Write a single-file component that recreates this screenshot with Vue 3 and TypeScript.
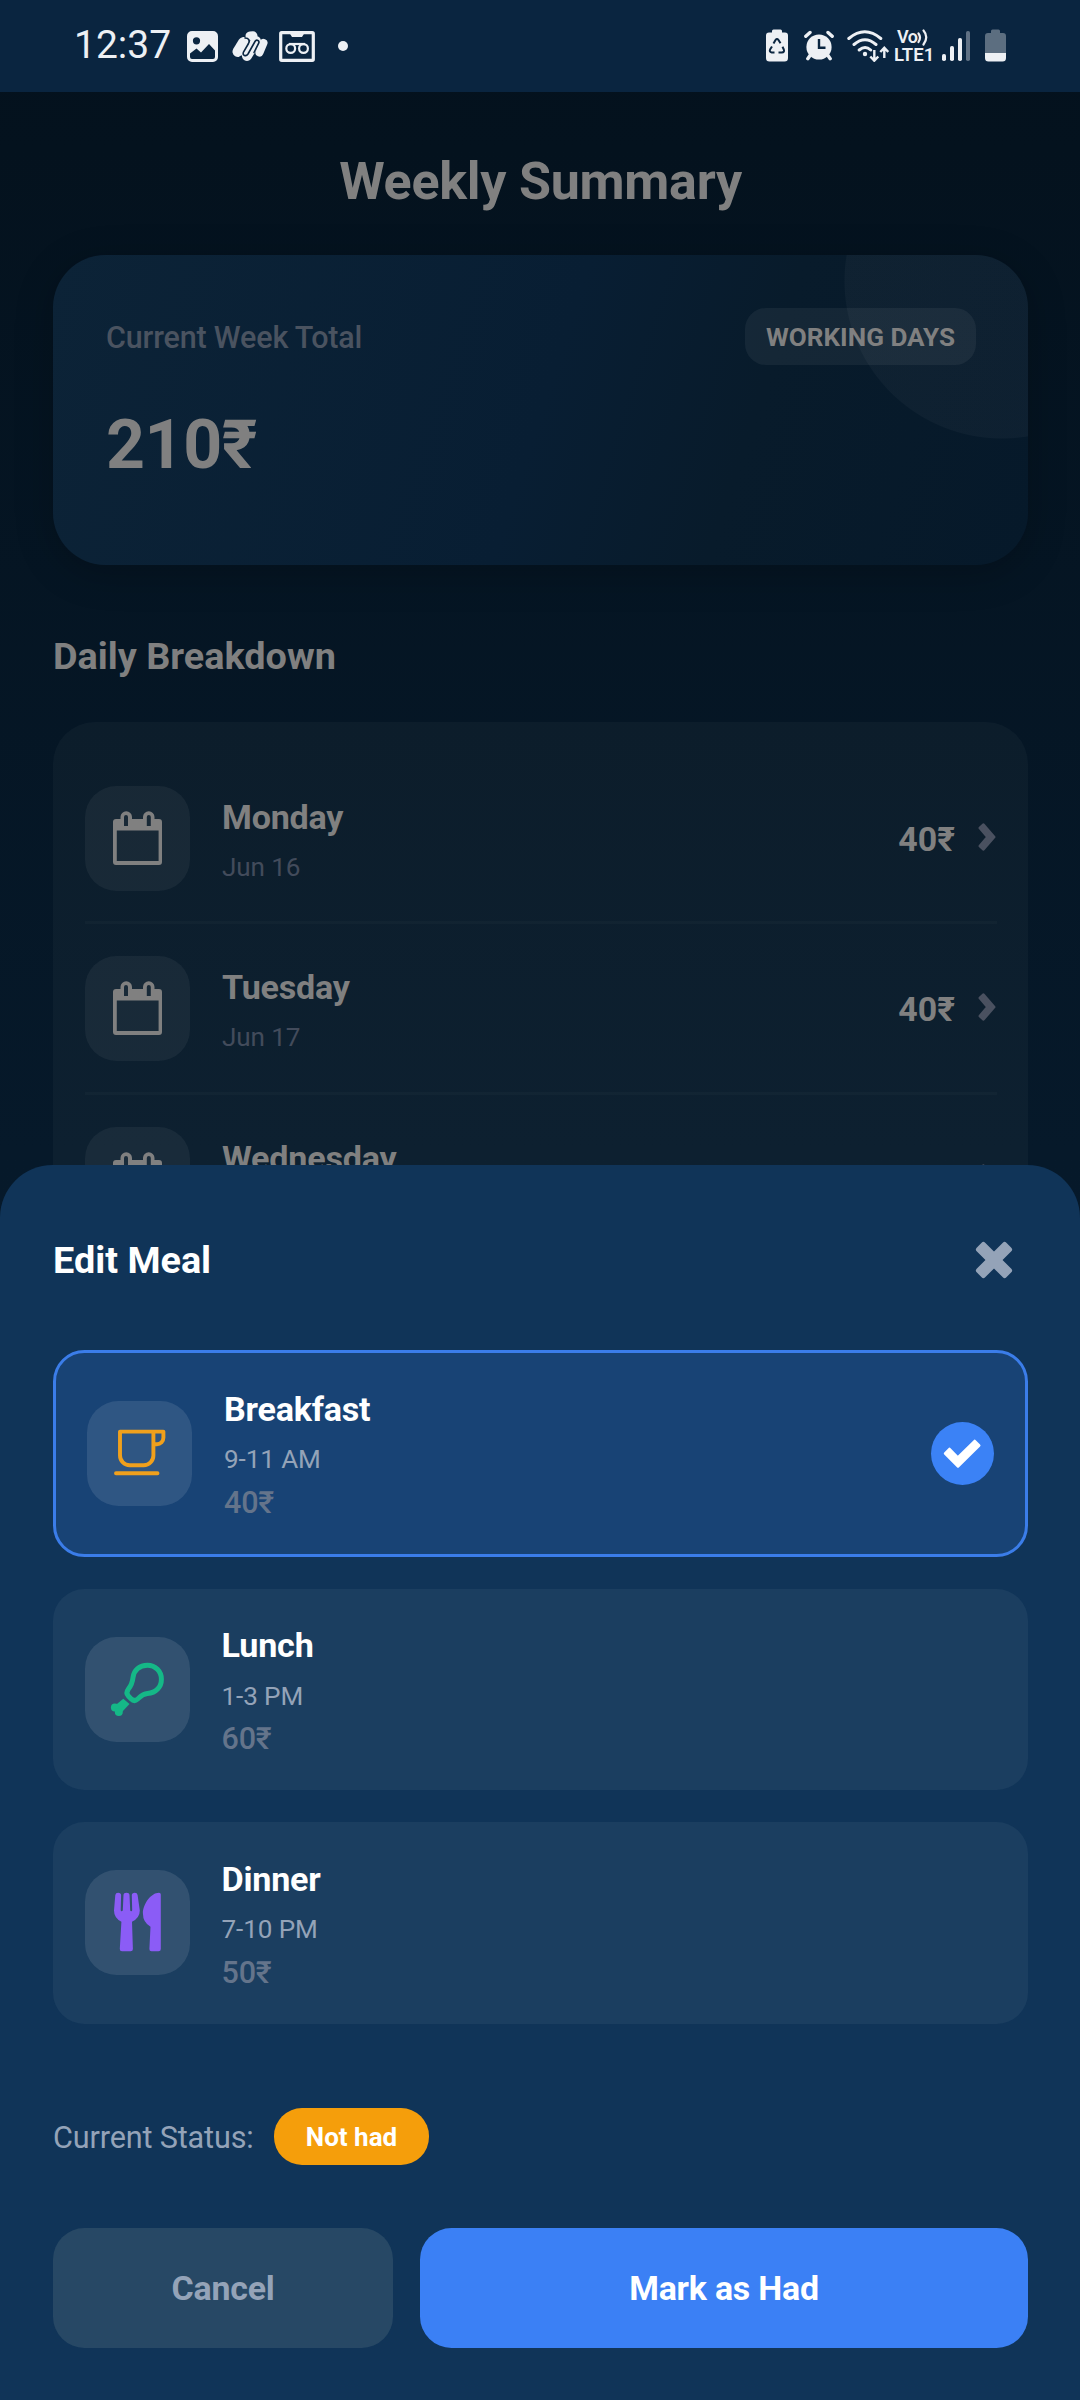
<script setup lang="ts">
import { ref } from 'vue'

interface Day {
  name: string
  date: string
  amount: string
}

interface Meal {
  id: string
  name: string
  time: string
  price: string
}

const days: Day[] = [
  { name: 'Monday', date: 'Jun 16', amount: '40₹' },
  { name: 'Tuesday', date: 'Jun 17', amount: '40₹' },
  { name: 'Wednesday', date: 'Jun 18', amount: '40₹' },
]

const meals: Meal[] = [
  { id: 'breakfast', name: 'Breakfast', time: '9-11 AM', price: '40₹' },
  { id: 'lunch', name: 'Lunch', time: '1-3 PM', price: '60₹' },
  { id: 'dinner', name: 'Dinner', time: '7-10 PM', price: '50₹' },
]

const selected = ref('breakfast')
</script>

<template>
  <div class="screen">
    <header class="statusbar">
      <div class="sb-left">
        <span class="clock">12:37</span>
        <svg class="i-photo" width="31" height="31" viewBox="0 0 31 31">
          <path fill="currentColor" fill-rule="evenodd" d="M5 0h21a5 5 0 0 1 5 5v21a5 5 0 0 1-5 5H5a5 5 0 0 1-5-5V5a5 5 0 0 1 5-5zM9.500 6.200a3.600 3.600 0 1 0 0 7.200a3.600 3.600 0 0 0 0-7.200zM3 22.500v3.500a2 2 0 0 0 2 2h21a2 2 0 0 0 2-2v-6.500l-6-6.500-8 8.500-4.500-4z" />
        </svg>
        <svg class="i-swirl" width="36" height="31" viewBox="0 0 36 31">
          <g fill="none" stroke="currentColor" stroke-linecap="round">
            <path stroke-width="11" d="M6 20.500 11.500 11.500" />
            <path stroke-width="9" d="M18 5 21 4.800" />
            <path stroke-width="10" d="M15 25 24 10" />
            <path stroke-width="8" d="M27.500 21.500 31.500 12" />
          </g>
          <path fill="none" stroke="#0a2540" stroke-width="1.600" stroke-linecap="round" d="M13 7c4 0 5 2.500 3.500 5.500l-5 8.500c-1.500 3.500 2.500 5 4.500 2l7-12.500c1.500-2.500 5-1 3.700 1.700L22 21.500M8.500 25.500v5" />
        </svg>
        <svg class="i-tape" width="36" height="31" viewBox="0 0 36 31">
          <rect x="1.700" y="1.700" width="32.600" height="27.600" rx="1" fill="none" stroke="currentColor" stroke-width="3.200" />
          <path fill="currentColor" d="M10.500 2h15l-2.500 4h-10z" />
          <g fill="none" stroke="currentColor" stroke-width="2.200">
            <circle cx="11.700" cy="17.500" r="4.400" />
            <circle cx="24.500" cy="17.500" r="4.400" />
            <path d="M10 13h16" />
          </g>
        </svg>
        <span class="dot"></span>
      </div>
      <div class="sb-right">
        <svg class="i-recycle" width="22" height="33" viewBox="0 0 22 33">
          <path fill="currentColor" d="M6 3.500V2a1.500 1.500 0 0 1 1.500-1.500h7A1.500 1.500 0 0 1 16 2v1.500h3a3 3 0 0 1 3 3V29a3.500 3.500 0 0 1-3.500 3.500h-15A3.500 3.500 0 0 1 0 29V6.500a3 3 0 0 1 3-3z" />
          <g fill="none" stroke="#0a2540" stroke-width="2" stroke-linejoin="round">
            <path d="M7.500 14.500 9.500 11q1.500-2 3 0l2 3.300M16.500 17.800l1.300 2.700q1 2.700-2 3h-3.300M8.500 23.500H5.700q-2.800-.500-1.500-3.200L6 17.500" />
          </g>
        </svg>
        <svg class="i-alarm" width="30" height="31" viewBox="0 0 30 31">
          <circle cx="15" cy="17" r="12.600" fill="currentColor" />
          <path fill="none" stroke="currentColor" stroke-width="3.400" stroke-linecap="round" d="M1.800 6.300 6 2.500M28.200 6.300 24 2.500M6 25.500 3.800 28.700M24 25.500l2.200 3.200" />
          <path fill="none" stroke="#0a2540" stroke-width="2.400" d="M15 9v8.800h6.500" />
        </svg>
        <svg class="i-wifi" width="42" height="32" viewBox="0 0 42 32">
          <g fill="none" stroke="currentColor" stroke-width="3" stroke-linecap="round">
            <path d="M1.800 8.500q16-13.500 32 0M7 14.500q11-9.500 22 0M12.200 20q6-5 11.500 0" />
          </g>
          <circle cx="18" cy="24" r="2.200" fill="currentColor" />
          <path fill="none" stroke="currentColor" stroke-width="2.400" d="M27.300 20v10.500M23.300 26.500l4 4.200 4-4.200M37.300 28V18M33.300 22l4-4.200 4 4.200" />
        </svg>
        <div class="volte">
          <span class="vo">Vo<svg width="12" height="17" viewBox="0 0 12 17"><path fill="none" stroke="currentColor" stroke-width="2.200" stroke-linecap="round" d="M1.500 4.500q3 4 0 8.500M6.500 1.500q5.500 6.500 0 14" /></svg></span>
          <span class="lte">LTE1</span>
        </div>
        <svg class="i-signal" width="28" height="30" viewBox="0 0 28 30">
          <g fill="currentColor">
            <rect x="0" y="23" width="4" height="7" rx="1.800" />
            <rect x="8" y="15" width="4" height="15" rx="1.800" />
            <rect x="16" y="7" width="4" height="23" rx="1.800" />
            <rect x="24" y="0" width="4" height="30" rx="1.800" opacity=".38" />
          </g>
        </svg>
        <svg class="i-batt" width="21" height="33" viewBox="0 0 21 33">
          <path fill="#5c6e80" d="M6 4V2a1.500 1.500 0 0 1 1.500-1.500h6A1.500 1.500 0 0 1 15 2v2h3a3 3 0 0 1 3 3v17H0V7a3 3 0 0 1 3-3z" />
          <path fill="currentColor" d="M0 24h21v5a3.500 3.500 0 0 1-3.500 3.500h-14A3.500 3.500 0 0 1 0 29z" />
        </svg>
      </div>
    </header>

    <main class="page">
      <h1 class="title">Weekly Summary</h1>

      <section class="summary">
        <div class="orb"></div>
        <div class="summary-top">
          <span class="summary-label">Current Week Total</span>
          <span class="badge">WORKING DAYS</span>
        </div>
        <div class="total">210₹</div>
      </section>

      <h2 class="section-title">Daily Breakdown</h2>

      <section class="days">
        <div v-for="day in days" :key="day.name" class="day">
          <div class="tile dim">
            <svg viewBox="0 0 105 105">
              <path fill="currentColor" fill-rule="evenodd" d="M28 36q0-3 3-3h4.500v-2a5.750 5.750 0 0 1 11.500 0v2H58v-2a5.750 5.750 0 0 1 11.500 0v2H74q3 0 3 3v40q0 3-3 3H31q-3 0-3-3zM31.800 44.500V75h41.800V44.500zM39 31v9h4v-9a2 2 0 0 0-4 0zM61.800 31v9h4v-9a2 2 0 0 0-4 0z" />
            </svg>
          </div>
          <div class="day-text">
            <span class="name">{{ day.name }}</span>
            <span class="sub">{{ day.date }}</span>
          </div>
          <span class="amount">{{ day.amount }}</span>
          <svg class="chev" width="18" height="28" viewBox="0 0 18 28">
            <path fill="currentColor" stroke="currentColor" stroke-width="2.400" stroke-linejoin="round" d="M1.700 5 5.500 1.500 16.300 14 5.500 26.500 1.700 23 9.300 14z" />
          </svg>
        </div>
      </section>
    </main>

    <section class="sheet">
      <div class="sheet-head">
        <h2 class="sheet-title">Edit Meal</h2>
        <svg class="close" width="36" height="36" viewBox="0 0 36 36">
          <g fill="currentColor">
            <rect x="-3" y="12" width="42" height="12" rx="2.500" transform="rotate(45 18 18)" />
            <rect x="-3" y="12" width="42" height="12" rx="2.500" transform="rotate(-45 18 18)" />
          </g>
        </svg>
      </div>

      <div class="meals">
        <div
          v-for="meal in meals"
          :key="meal.id"
          class="meal"
          :class="{ active: selected === meal.id }"
          @click="selected = meal.id"
        >
          <div class="tile">
            <svg v-if="meal.id === 'breakfast'" class="amber" viewBox="0 0 105 105">
              <g fill="none" stroke="currentColor" stroke-width="3.900" stroke-linecap="round" stroke-linejoin="round">
                <path d="M33 30.600v24a9.700 9.700 0 0 0 9.700 9.700h14a9.700 9.700 0 0 0 9.700-9.700v-24zM66.400 30.600h10v6.200a6.500 6.500 0 0 1-6.500 6.500h-3.500M29 72.200h41.500" />
              </g>
            </svg>
            <svg v-else-if="meal.id === 'lunch'" class="green" viewBox="0 0 105 105">
              <path fill="none" stroke="currentColor" stroke-width="5" stroke-linejoin="round" d="M62.400 28.200C70.500 28.200 76.400 34.500 76.400 42.200C76.400 50 71 55.800 62.500 56.500C57 57 55.500 59.500 52.700 62C50.500 64 48 63.800 46 61.800L43.300 59C41 56.300 41.500 54.500 43.300 52.200C46.800 48 47.500 45 48 40.500C48.800 33 54.500 28.200 62.400 28.200z" />
              <g fill="currentColor">
                <path d="M38.300 61.700 44.500 67 36.500 75.500 29.500 69z" />
                <circle cx="29.900" cy="70.600" r="4" />
                <circle cx="33.800" cy="75" r="4" />
              </g>
            </svg>
            <svg v-else class="violet" viewBox="0 0 105 105">
              <path fill="currentColor" d="M30.300 25q.400-2.300 2.800-2.300 3 0 3 2.600L35.700 40q0 1.300 1 1.300t1.100-1.300L38.500 25q.200-2.300 3-2.300t3 2.300L45.200 40q0 1.300 1 1.300t1-1.300L46.800 25.300q0-2.600 3-2.600 2.400 0 2.800 2.300L54.800 40.500Q54.800 48 47 51.700L47.900 79q0 2.300-2.300 2.300H37q-2.300 0-2.200-2.300L36.400 51.700Q29 48 29 40.500z" />
              <path fill="currentColor" d="M75.800 24.500V79q0 2.300-2.300 2.300H66.500q-2.200 0-2.100-2.300L65.500 56.700Q57.900 52.500 57.900 43.300C58 34 66 22.700 74 22.700q1.800 0 1.800 1.800z" />
            </svg>
          </div>
          <div class="meal-text">
            <span class="name">{{ meal.name }}</span>
            <span class="sub">{{ meal.time }}</span>
            <span class="price">{{ meal.price }}</span>
          </div>
          <div v-if="selected === meal.id" class="tick">
            <svg viewBox="0 0 63 63">
              <path fill="#fff" stroke="#fff" stroke-width="3" stroke-linejoin="round" d="M18.500 27.200 26.800 35.700 43.700 19.200 48 23.500 27 44.200 14.300 31.500z" />
            </svg>
          </div>
        </div>
      </div>

      <div class="status">
        <span class="status-label">Current Status:</span>
        <span class="pill">Not had</span>
      </div>

      <div class="actions">
        <button class="btn cancel">Cancel</button>
        <button class="btn primary">Mark as Had</button>
      </div>
    </section>
  </div>
</template>

<style>
body {
  margin: 0;
  background: #04121f;
}
</style>

<style scoped>
.screen {
  position: relative;
  width: 1080px;
  height: 2400px;
  overflow: hidden;
  font-family: Roboto, 'Noto Sans', sans-serif;
  background: linear-gradient(180deg, #04111d 0, #04121e 150px, #06192a 1150px, #071b2f 2400px);
}
h1,
h2 {
  margin: 0;
}

/* status bar */
.statusbar {
  height: 92px;
  display: flex;
  justify-content: space-between;
  background: #0a2540;
  color: #edf0f4;
}
.sb-left,
.sb-right {
  display: flex;
  align-items: flex-start;
}
.sb-left {
  padding-left: 74px;
}
.clock {
  width: 113px;
  margin-top: 22px;
  font-size: 39px;
  line-height: 46px;
}
.i-photo { margin-top: 31px; }
.i-swirl { margin: 31px 0 0 13.500px; }
.i-tape { margin: 31px 0 0 11.500px; }
.dot {
  width: 10px;
  height: 10px;
  margin: 41px 0 0 23px;
  border-radius: 50%;
  background: currentColor;
}
.sb-right {
  padding-right: 74px;
}
.i-recycle { margin-top: 29px; }
.i-alarm { margin: 30px 0 0 16.500px; }
.i-wifi { margin: 30px 0 0 13px; }
.volte {
  display: flex;
  flex-direction: column;
  width: 40px;
  margin: 29px 0 0 5px;
  font-weight: 600;
}
.vo {
  display: flex;
  height: 17px;
  padding-left: 3px;
  font-size: 18px;
  line-height: 16px;
  letter-spacing: -0.500px;
}
.lte {
  font-size: 18.500px;
  line-height: 18px;
}
.i-signal { margin: 31px 0 0 8px; }
.i-batt { margin: 29px 0 0 15px; }

/* dimmed page */
.page {
  padding: 54px 52px 0 53px;
  color: #808080;
}
.title {
  height: 70px;
  font-size: 52px;
  line-height: 72px;
  letter-spacing: -0.250px;
  font-weight: 700;
  text-align: center;
}
.summary {
  position: relative;
  box-sizing: border-box;
  height: 310px;
  margin-top: 39px;
  padding: 53px 52px 53px 53px;
  border-radius: 52.500px;
  background: linear-gradient(108deg, #0c2337 0%, #081e33 50%, #081b2b 70%, #06192a 100%);
  box-shadow: 0 8px 38px rgba(0, 0, 0, 0.220);
}
.orb {
  position: absolute;
  inset: 0;
  border-radius: 52.500px;
  background: radial-gradient(circle 158px at 949px 26px, rgba(255, 255, 255, 0.030) 157px, transparent 158px);
}
.summary-top {
  position: relative;
  display: flex;
  justify-content: space-between;
  align-items: center;
  height: 57px;
}
.summary-label {
  padding-top: 2px;
  font-size: 30.500px;
  line-height: 38px;
  letter-spacing: -0.170px;
  font-weight: 500;
  color: #4a5360;
}
.badge {
  padding: 14px 21px 12px;
  border-radius: 21px;
  background: rgba(255, 255, 255, 0.055);
  font-size: 26.100px;
  line-height: 31px;
  font-weight: 700;
}
.total {
  position: relative;
  margin-top: 40px;
  font-size: 68px;
  line-height: 80px;
  letter-spacing: -0.400px;
  font-weight: 700;
}
.section-title {
  margin-top: 68px;
  font-size: 37.800px;
  line-height: 46px;
  font-weight: 700;
}
.days {
  margin-top: 43px;
  height: 800px;
  padding: 31.500px 31px 0 32px;
  border-radius: 42px;
  background: rgba(255, 255, 255, 0.030);
}
.day {
  box-sizing: border-box;
  display: flex;
  align-items: flex-start;
  height: 170.600px;
  padding-top: 32px;
  border-bottom: 3px solid rgba(255, 255, 255, 0.022);
}
.tile {
  flex: none;
  width: 105px;
  height: 105px;
  border-radius: 31.500px;
  background: rgba(255, 255, 255, 0.100);
}
.tile svg,
.tick svg {
  display: block;
  width: 100%;
  height: 100%;
}
.tile.dim {
  background: rgba(255, 255, 255, 0.050);
}
.day-text {
  flex: 1;
  display: flex;
  flex-direction: column;
  gap: 15.200px;
  margin: 11px 0 0 32px;
}
.name {
  font-size: 34.125px;
  line-height: 40px;
  letter-spacing: -0.220px;
  font-weight: 700;
}
.sub {
  font-size: 26.100px;
  line-height: 30px;
  letter-spacing: -0.100px;
}
.day .sub {
  color: #424b5b;
}
.amount {
  margin-top: 34px;
  font-size: 33.900px;
  line-height: 40px;
  font-weight: 700;
}
.chev {
  margin: 37px 1px 0 23px;
  color: #4a5160;
}

/* bottom sheet */
.sheet {
  position: absolute;
  left: 0;
  right: 0;
  bottom: 0;
  box-sizing: border-box;
  height: 1235px;
  padding: 72px 52px 0 53px;
  border-radius: 52.500px 52.500px 0 0;
  background: #103458;
  color: #fff;
}
.sheet-head {
  display: flex;
  justify-content: space-between;
  align-items: center;
  height: 46px;
}
.sheet-title {
  font-size: 37.800px;
  line-height: 46px;
  font-weight: 700;
}
.close {
  margin-right: 16px;
  overflow: visible;
  color: #94a3b8;
}
.meals {
  display: flex;
  flex-direction: column;
  gap: 31.500px;
  margin-top: 67px;
}
.meal {
  box-sizing: border-box;
  display: flex;
  align-items: center;
  height: 201.800px;
  padding: 0 32px;
  border-radius: 31.500px;
  background: #1b3e60;
}
.meal.active {
  height: 207px;
  padding: 0 31px;
  border: 3px solid #3b7de9;
  background: #184375;
}
.meal-text {
  flex: 1;
  display: flex;
  flex-direction: column;
  margin: 4px 0 0 31.500px;
}
.meal.active .meal-text {
  margin: 3px 0 0 32px;
}
.meal .sub {
  margin-top: 15.200px;
  color: #94a3b8;
}
.price {
  margin-top: 10.700px;
  font-size: 30.500px;
  line-height: 36px;
  letter-spacing: -0.150px;
  font-weight: 500;
  color: #64748b;
}
.amber { color: #f0a01c; }
.green { color: #15b887; }
.violet { color: #8b5cf6; }
.tick {
  width: 63px;
  height: 63px;
  border-radius: 50%;
  background: #3b82f6;
}
.status {
  display: flex;
  align-items: center;
  height: 57px;
  margin-top: 84px;
}
.status-label {
  padding-top: 3px;
  width: 200px;
  font-size: 30.600px;
  line-height: 38px;
  letter-spacing: -0.150px;
  white-space: nowrap;
  color: #94a3b8;
}
.pill {
  box-sizing: border-box;
  width: 155px;
  margin-left: 21px;
  padding: 14px 0 12px;
  border-radius: 28px;
  background: #f59e0b;
  font-size: 26px;
  line-height: 31px;
  font-weight: 700;
  text-align: center;
}
.actions {
  display: flex;
  gap: 27px;
  margin-top: 63px;
}
.btn {
  height: 120px;
  padding: 2px 0 0;
  border: 0;
  border-radius: 31.500px;
  font-family: inherit;
  font-size: 33.900px;
  letter-spacing: -0.200px;
  font-weight: 700;
}
.cancel {
  width: 340px;
  background: #274865;
  color: #94a3b8;
}
.primary {
  flex: 1;
  background: #3b80f5;
  color: #fff;
}
</style>
